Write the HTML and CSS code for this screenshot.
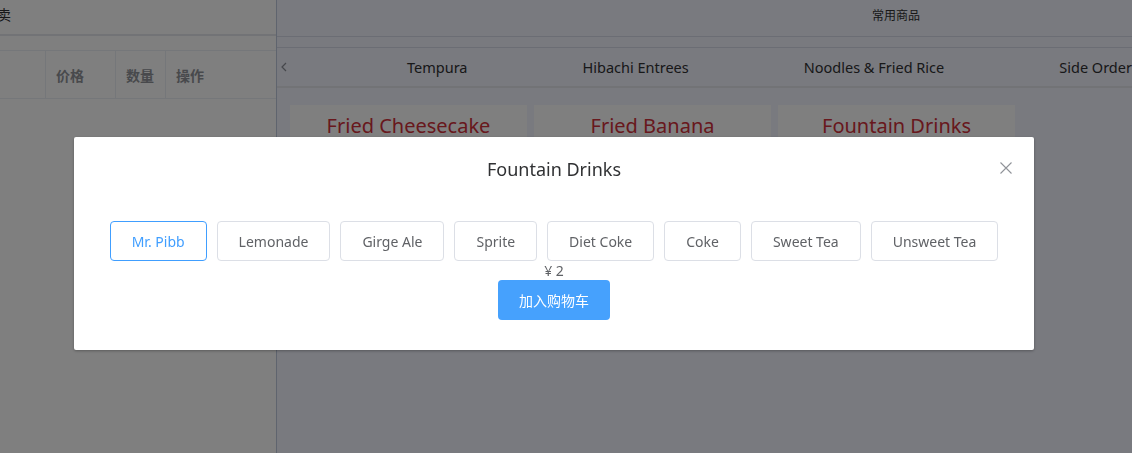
FILE: index.html
```html
<!DOCTYPE html>
<html lang="zh-CN">
<head>
<meta charset="utf-8">
<title>POS</title>
<link rel="stylesheet" href="styles.css">
</head>
<body>
<div class="app">
  <aside class="left">
    <div class="left-tabs"><span class="left-tab">外卖</span></div>
    <div class="left-gap"></div>
    <div class="order-head">
      <div class="col col-name"></div>
      <div class="col col-price">价格</div>
      <div class="col col-qty">数量</div>
      <div class="col col-op">操作</div>
    </div>
  </aside>
  <main class="right">
    <div class="right-head"><span>常用商品</span></div>
    <div class="right-gap"></div>
    <div class="cat-bar">
      <span class="cat-prev">
        <svg width="8" height="10" viewBox="0 0 8 10"><path d="M6 1 L2 5 L6 9" fill="none" stroke="#8c8f98" stroke-width="1.2"/></svg>
      </span>
      <div class="cat-list">
        <span class="cat">Tempura</span>
        <span class="cat">Hibachi Entrees</span>
        <span class="cat">Noodles &amp; Fried Rice</span>
        <span class="cat">Side Order</span>
      </div>
    </div>
    <div class="goods">
      <div class="good">Fried Cheesecake</div>
      <div class="good">Fried Banana</div>
      <div class="good">Fountain Drinks</div>
    </div>
  </main>
</div>

<div class="mask">
  <div class="dialog">
    <div class="dialog-header">
      <span class="dialog-title">Fountain Drinks</span>
      <button class="dialog-close" aria-label="close">
        <svg width="12" height="12" viewBox="0 0 12 12"><path d="M0.5 0.5 L11.5 11.5 M11.5 0.5 L0.5 11.5" stroke="#909399" stroke-width="1.1" fill="none"/></svg>
      </button>
    </div>
    <div class="dialog-body">
      <div class="options">
        <button class="opt active">Mr. Pibb</button>
        <button class="opt">Lemonade</button>
        <button class="opt">Girge Ale</button>
        <button class="opt">Sprite</button>
        <button class="opt">Diet Coke</button>
        <button class="opt">Coke</button>
        <button class="opt">Sweet Tea</button>
        <button class="opt">Unsweet Tea</button>
      </div>
      <div class="price">¥ 2</div>
      <button class="add-cart">加入购物车</button>
    </div>
  </div>
</div>
</body>
</html>
```

FILE: styles.css
```css
html, body {
  margin: 0;
  padding: 0;
}
body {
  width: 1132px;
  height: 453px;
  overflow: hidden;
  font-family: "Noto Sans", "Noto Sans CJK SC", sans-serif;
  color: #303133;
}
.app {
  display: flex;
  height: 453px;
}
.left {
  width: 276px;
  flex: none;
  background: #ffffff;
  border-right: 1px solid #bec9dd;
  overflow: hidden;
}
.left-tabs {
  height: 36px;
  box-sizing: border-box;
  padding-top: 5px;
  border-bottom: 2px solid #e4e7ed;
  font-size: 14px;
  line-height: 20px;
  color: #303133;
  white-space: nowrap;
}
.left-tab {
  margin-left: -17px;
}
.left-gap {
  height: 14px;
  border-bottom: 1px solid #ebeef5;
}
.order-head {
  display: flex;
  height: 47px;
  border-bottom: 1px solid #ebeef5;
}
.col {
  box-sizing: border-box;
  padding-left: 10px;
  font-size: 14px;
  font-weight: bold;
  color: #909399;
  display: flex;
  align-items: center;
  border-right: 1px solid #ebeef5;
}
.col-name { width: 46px; padding: 0; }
.col-price { width: 70px; }
.col-qty { width: 50px; }
.col-op { flex: 1; border-right: 0; }

.right {
  flex: 1;
  min-width: 0;
  background: #f2f4fe;
  overflow: hidden;
}
.right-head {
  height: 37px;
  box-sizing: border-box;
  border-bottom: 1px solid #d6dbe8;
  padding: 7px 0 0 595px;
  font-size: 12px;
  line-height: 17px;
  color: #303133;
}
.right-gap {
  height: 10px;
  border-bottom: 1px solid #d6dbe8;
}
.cat-bar {
  height: 38px;
  border-bottom: 2px solid #e4e7ed;
  display: flex;
  align-items: center;
}
.cat-prev {
  flex: none;
  width: 14px;
  padding-left: 3px;
  display: flex;
  align-items: center;
}
.cat-list {
  flex: none;
  display: flex;
  gap: 115px;
  padding-left: 113px;
  white-space: nowrap;
  font-size: 14.5px;
  color: #303133;
}
.goods {
  display: flex;
  gap: 7px;
  padding: 17px 0 0 13px;
}
.good {
  width: 237px;
  height: 70px;
  background: #ffffff;
  color: #d0303a;
  font-size: 20px;
  text-align: center;
  line-height: 42px;
}

.mask {
  position: fixed;
  inset: 0;
  background: rgba(0, 0, 0, 0.5);
  display: flex;
  justify-content: center;
  align-items: flex-start;
  padding: 137px 24px 0 0;
}
.dialog {
  width: 960px;
  background: #ffffff;
  border-radius: 2px;
  box-shadow: 0 1px 3px rgba(0, 0, 0, 0.3);
}
.dialog-header {
  padding: 20px 20px 10px;
  display: flex;
  justify-content: center;
  position: relative;
}
.dialog-title {
  font-size: 18px;
  line-height: 24px;
  color: #303133;
}
.dialog-close {
  position: absolute;
  top: 25px;
  right: 22px;
  border: 0;
  background: none;
  padding: 0;
  width: 12px;
  height: 12px;
  display: flex;
  cursor: pointer;
}
.dialog-body {
  padding: 30px 20px;
  display: flex;
  flex-direction: column;
  align-items: center;
}
.options {
  display: flex;
  gap: 10px;
}
.opt {
  height: 40px;
  box-sizing: border-box;
  padding: 0 21px;
  border: 1px solid #dcdfe6;
  border-radius: 4px;
  background: #ffffff;
  font-family: inherit;
  font-size: 14px;
  color: #606266;
}
.opt.active {
  border-color: #409eff;
  color: #409eff;
}
.price {
  font-size: 14px;
  line-height: 19px;
  color: #606266;
}
.add-cart {
  height: 40px;
  width: 112px;
  border: 0;
  border-radius: 4px;
  background: #46a1fd;
  color: #ffffff;
  font-family: inherit;
  font-size: 14px;
}
```
